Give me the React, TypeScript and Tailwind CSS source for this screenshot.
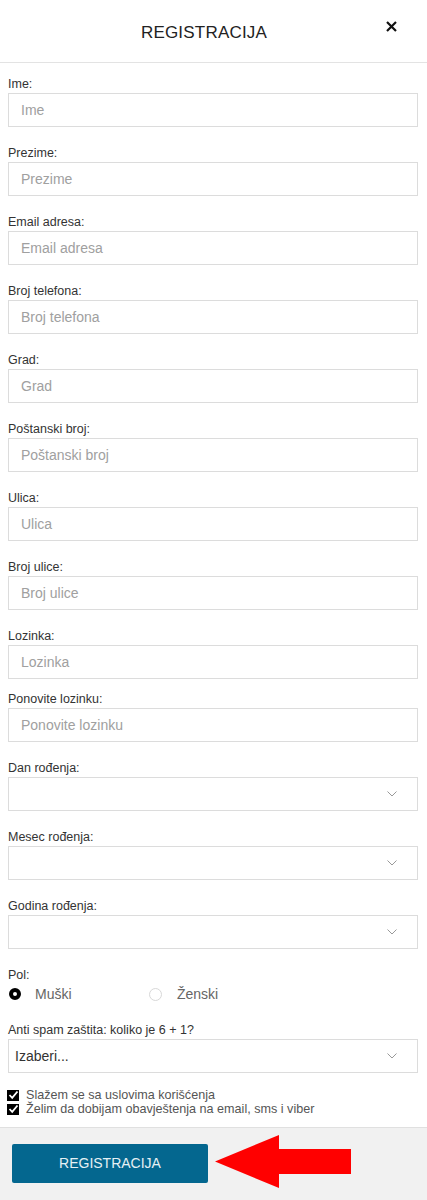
import React from "react";

type Field = { label: string; mb?: string };

const textFields: Field[] = [
  { label: "Ime" },
  { label: "Prezime" },
  { label: "Email adresa" },
  { label: "Broj telefona" },
  { label: "Grad" },
  { label: "Poštanski broj" },
  { label: "Ulica" },
  { label: "Broj ulice" },
  { label: "Lozinka", mb: "mb-[11px]" },
  { label: "Ponovite lozinku" },
];

const selectFields = ["Dan rođenja", "Mesec rođenja", "Godina rođenja"];

function Chevron() {
  return (
    <svg width="10" height="6" viewBox="0 0 10 6" className="shrink-0">
      <polyline points="0.5,0.5 5,5 9.5,0.5" fill="none" stroke="#999" strokeWidth="1" />
    </svg>
  );
}

function SelectBox({ value }: { value?: string }) {
  return (
    <div className="flex h-[34px] items-center justify-between border border-[#dcdcdc] bg-white pl-[6px] pr-[20px]">
      <span className="text-[14px] text-[#333]">{value ?? ""}</span>
      <Chevron />
    </div>
  );
}

function CheckBox() {
  return (
    <span className="flex h-[11px] w-[12px] shrink-0 items-center justify-center bg-black">
      <svg width="11" height="10" viewBox="0 0 11 10">
        <polyline points="1.5,5 4.2,7.8 9.5,1.5" fill="none" stroke="#fff" strokeWidth="1.8" />
      </svg>
    </span>
  );
}

export default function App() {
  return (
    <div className="min-h-screen bg-white font-['Liberation_Sans',Arial,sans-serif] text-[#333]">
      <header className="relative flex h-[63px] items-center justify-center border-b border-[#e3e3e3] pr-[19px] pt-[2px]">
        <h1 className="text-[17px] leading-[17px] tracking-[0.2px] text-[#222]">REGISTRACIJA</h1>
        <button className="absolute right-[30px] top-[20px] flex h-[12px] w-[12px] items-center justify-center">
          <svg width="11" height="11" viewBox="0 0 11 11">
            <path d="M1 1 L10 10 M10 1 L1 10" stroke="#111" strokeWidth="2.2" />
          </svg>
        </button>
      </header>

      <form className="pl-2 pr-[9px] pt-3">
        {textFields.map((f) => (
          <div key={f.label} className={f.mb ?? "mb-[17px]"}>
            <label className="block text-[12.5px] leading-[18px] text-[#333]">{f.label}:</label>
            <input
              placeholder={f.label}
              className="block h-[34px] w-full border border-[#dcdcdc] bg-white pl-3 text-[14px] text-[#333] outline-none placeholder:text-[#a0a0a0]"
            />
          </div>
        ))}

        {selectFields.map((s) => (
          <div key={s} className="mb-[17px]">
            <label className="block text-[12.5px] leading-[18px] text-[#333]">{s}:</label>
            <SelectBox />
          </div>
        ))}

        <div className="mb-[17px]">
          <label className="block text-[12.5px] leading-[18px] text-[#333]">Pol:</label>
          <div className="flex h-[20px] items-center">
            <div className="flex w-[141px] items-center pl-[1px]">
              <span className="h-[12px] w-[12px] rounded-full border-[4px] border-black bg-white" />
              <span className="ml-[14px] text-[14px] text-[#666]">Muški</span>
            </div>
            <div className="flex items-center">
              <span className="h-[13px] w-[13px] rounded-full border border-[#d8d8d8] bg-white" />
              <span className="ml-[15px] text-[14px] text-[#666]">Ženski</span>
            </div>
          </div>
        </div>

        <div>
          <label className="block text-[12.5px] leading-[18px] text-[#333]">Anti spam zaštita: koliko je 6 + 1?</label>
          <SelectBox value="Izaberi..." />
        </div>

        <div className="mb-[11px] mt-[15px]">
          <div className="-ml-[1px] flex h-[14px] items-center gap-[7px]">
            <CheckBox />
            <span className="text-[12.6px] leading-[14px] text-[#555]">Slažem se sa uslovima korišćenja</span>
          </div>
          <div className="-ml-[1px] flex h-[14px] items-center gap-[7px]">
            <CheckBox />
            <span className="text-[12.6px] leading-[14px] text-[#555]">Želim da dobijam obavještenja na email, sms i viber</span>
          </div>
        </div>
      </form>

      <footer className="flex items-start border-t border-[#e0e0e0] bg-[#f1f1f1] pb-[17px] pl-3 pt-4">
        <button className="flex h-[39px] w-[196px] items-center justify-center rounded-[2px] bg-[#04678f] text-[14px] text-[#e6f0f4]">
          REGISTRACIJA
        </button>
        <svg width="136" height="53" viewBox="0 0 136 53" className="-mb-[5px] -mt-[9px] ml-[7px]">
          <polygon points="0,26.5 64,0 64,14 136,14 136,39 64,39 64,53" fill="#ff0000" />
        </svg>
      </footer>
    </div>
  );
}
